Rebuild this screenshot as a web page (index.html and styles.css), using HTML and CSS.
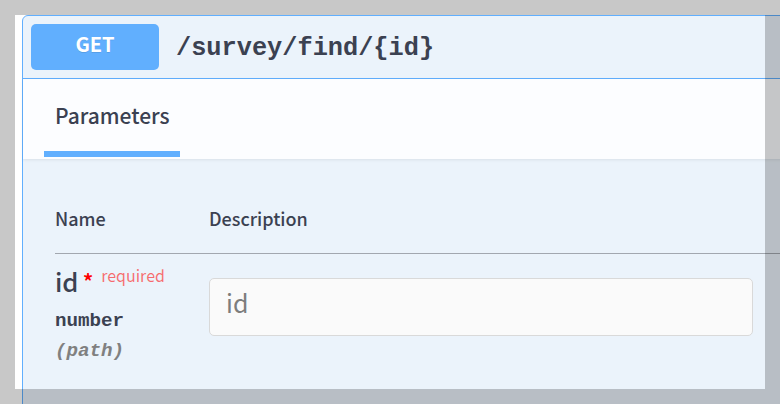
FILE: index.html
```html
<!DOCTYPE html>
<html>
<head>
<meta charset="utf-8">
<link rel="stylesheet" href="styles.css">
</head>
<body>
<div class="page">
  <div class="opblock">
    <div class="summary">
      <span class="method">GET</span>
      <span class="path">/survey/find/{id}</span>
    </div>
    <div class="section-header">
      <div class="tab"><span class="tab-label">Parameters</span></div>
    </div>
    <div class="params">
      <div class="thead">
        <div class="col-name">Name</div>
        <div class="col-desc">Description</div>
      </div>
      <div class="prow">
        <div class="col-name">
          <div class="pname">id<span class="star">&nbsp;*</span><span class="req">required</span></div>
          <div class="ptype">number</div>
          <div class="pin">(path)</div>
        </div>
        <div class="col-desc">
          <input class="pinput" type="text" placeholder="id">
        </div>
      </div>
    </div>
  </div>
</div>
<div class="overlay"></div>
</body>
</html>
```

FILE: styles.css
```css
html, body {
  margin: 0;
  padding: 0;
  background: #ffffff;
  overflow: hidden;
  width: 780px;
  height: 404px;
}

body {
  position: relative;
  font-family: "Noto Sans CJK KR", "Noto Sans", sans-serif;
  color: #3b4151;
}

.page {
  padding: 15px 0 0 22px;
}

.opblock {
  width: 1000px;
  border: 1px solid #61affe;
  border-radius: 6px;
  background: #ebf3fb;
}

.summary {
  display: flex;
  align-items: center;
  padding: 8px;
  border-bottom: 1px solid #61affe;
}

.method {
  box-sizing: border-box;
  width: 128px;
  height: 46px;
  padding-bottom: 7px;
  border-radius: 5px;
  background: #61affe;
  color: #ffffff;
  font-weight: 700;
  font-size: 20px;
  display: flex;
  align-items: center;
  justify-content: center;
  text-shadow: 0 1px 0 rgba(0, 0, 0, 0.1);
}

.path {
  margin-left: 17px;
  padding-top: 2px;
  font-family: "Liberation Mono", monospace;
  font-weight: 700;
  font-size: 25.3px;
  color: #3b4151;
}

.section-header {
  height: 80px;
  padding-left: 21px;
  background: rgba(255, 255, 255, 0.82);
  box-shadow: 0 1px 3px rgba(0, 0, 0, 0.08);
  position: relative;
}

.tab {
  display: inline-flex;
  flex-direction: column;
  width: 136px;
}

.tab-label {
  height: 72px;
  display: flex;
  align-items: center;
  padding-left: 11px;
  font-size: 21px;
  font-weight: 500;
  color: #3b4151;
}

.tab::after {
  content: "";
  display: block;
  height: 6px;
  background: #61affe;
}

.params {
  padding: 0 0 200px 32px;
}

.thead {
  display: flex;
  padding: 45px 0 20px;
  line-height: 28.8px;
  font-size: 18px;
  font-weight: 500;
  border-bottom: 1px solid #a2a7af;
}

.col-name {
  width: 154px;
  flex: none;
}

.col-desc {
  flex: none;
}

.prow {
  display: flex;
}

.pname {
  margin-top: 8px;
  font-size: 25.6px;
  font-weight: 500;
  color: #3b4151;
}

.star {
  color: #ff0000;
  font-size: 20px;
  font-weight: 700;
  position: relative;
  top: -3px;
}

.req {
  position: relative;
  top: -10px;
  padding-left: 8px;
  font-size: 16px;
  font-weight: 400;
  color: rgba(255, 0, 0, 0.56);
}

.ptype {
  margin-top: 11px;
  line-height: 22px;
  font-family: "Liberation Mono", monospace;
  font-weight: 700;
  font-size: 19.2px;
  color: #3b4151;
}

.pin {
  margin-top: 8px;
  line-height: 22px;
  font-family: "Liberation Mono", monospace;
  font-weight: 700;
  font-style: italic;
  font-size: 19.2px;
  color: #808080;
}

.pinput {
  display: block;
  box-sizing: border-box;
  margin-top: 24px;
  width: 544px;
  height: 58px;
  padding: 0 16px 9px;
  border: 1px solid #d9d9d9;
  border-radius: 5px;
  background: #fafafa;
  font-family: "Noto Sans CJK KR", "Noto Sans", sans-serif;
  font-size: 25px;
  font-weight: 400;
  color: #3b4151;
  outline: none;
}

.pinput::placeholder {
  color: #7d7d7d;
}

.overlay {
  position: absolute;
  left: 15px;
  top: 15px;
  width: 750px;
  height: 374px;
  box-shadow: 0 0 0 1200px rgba(0, 0, 0, 0.215);
  pointer-events: none;
}
```
